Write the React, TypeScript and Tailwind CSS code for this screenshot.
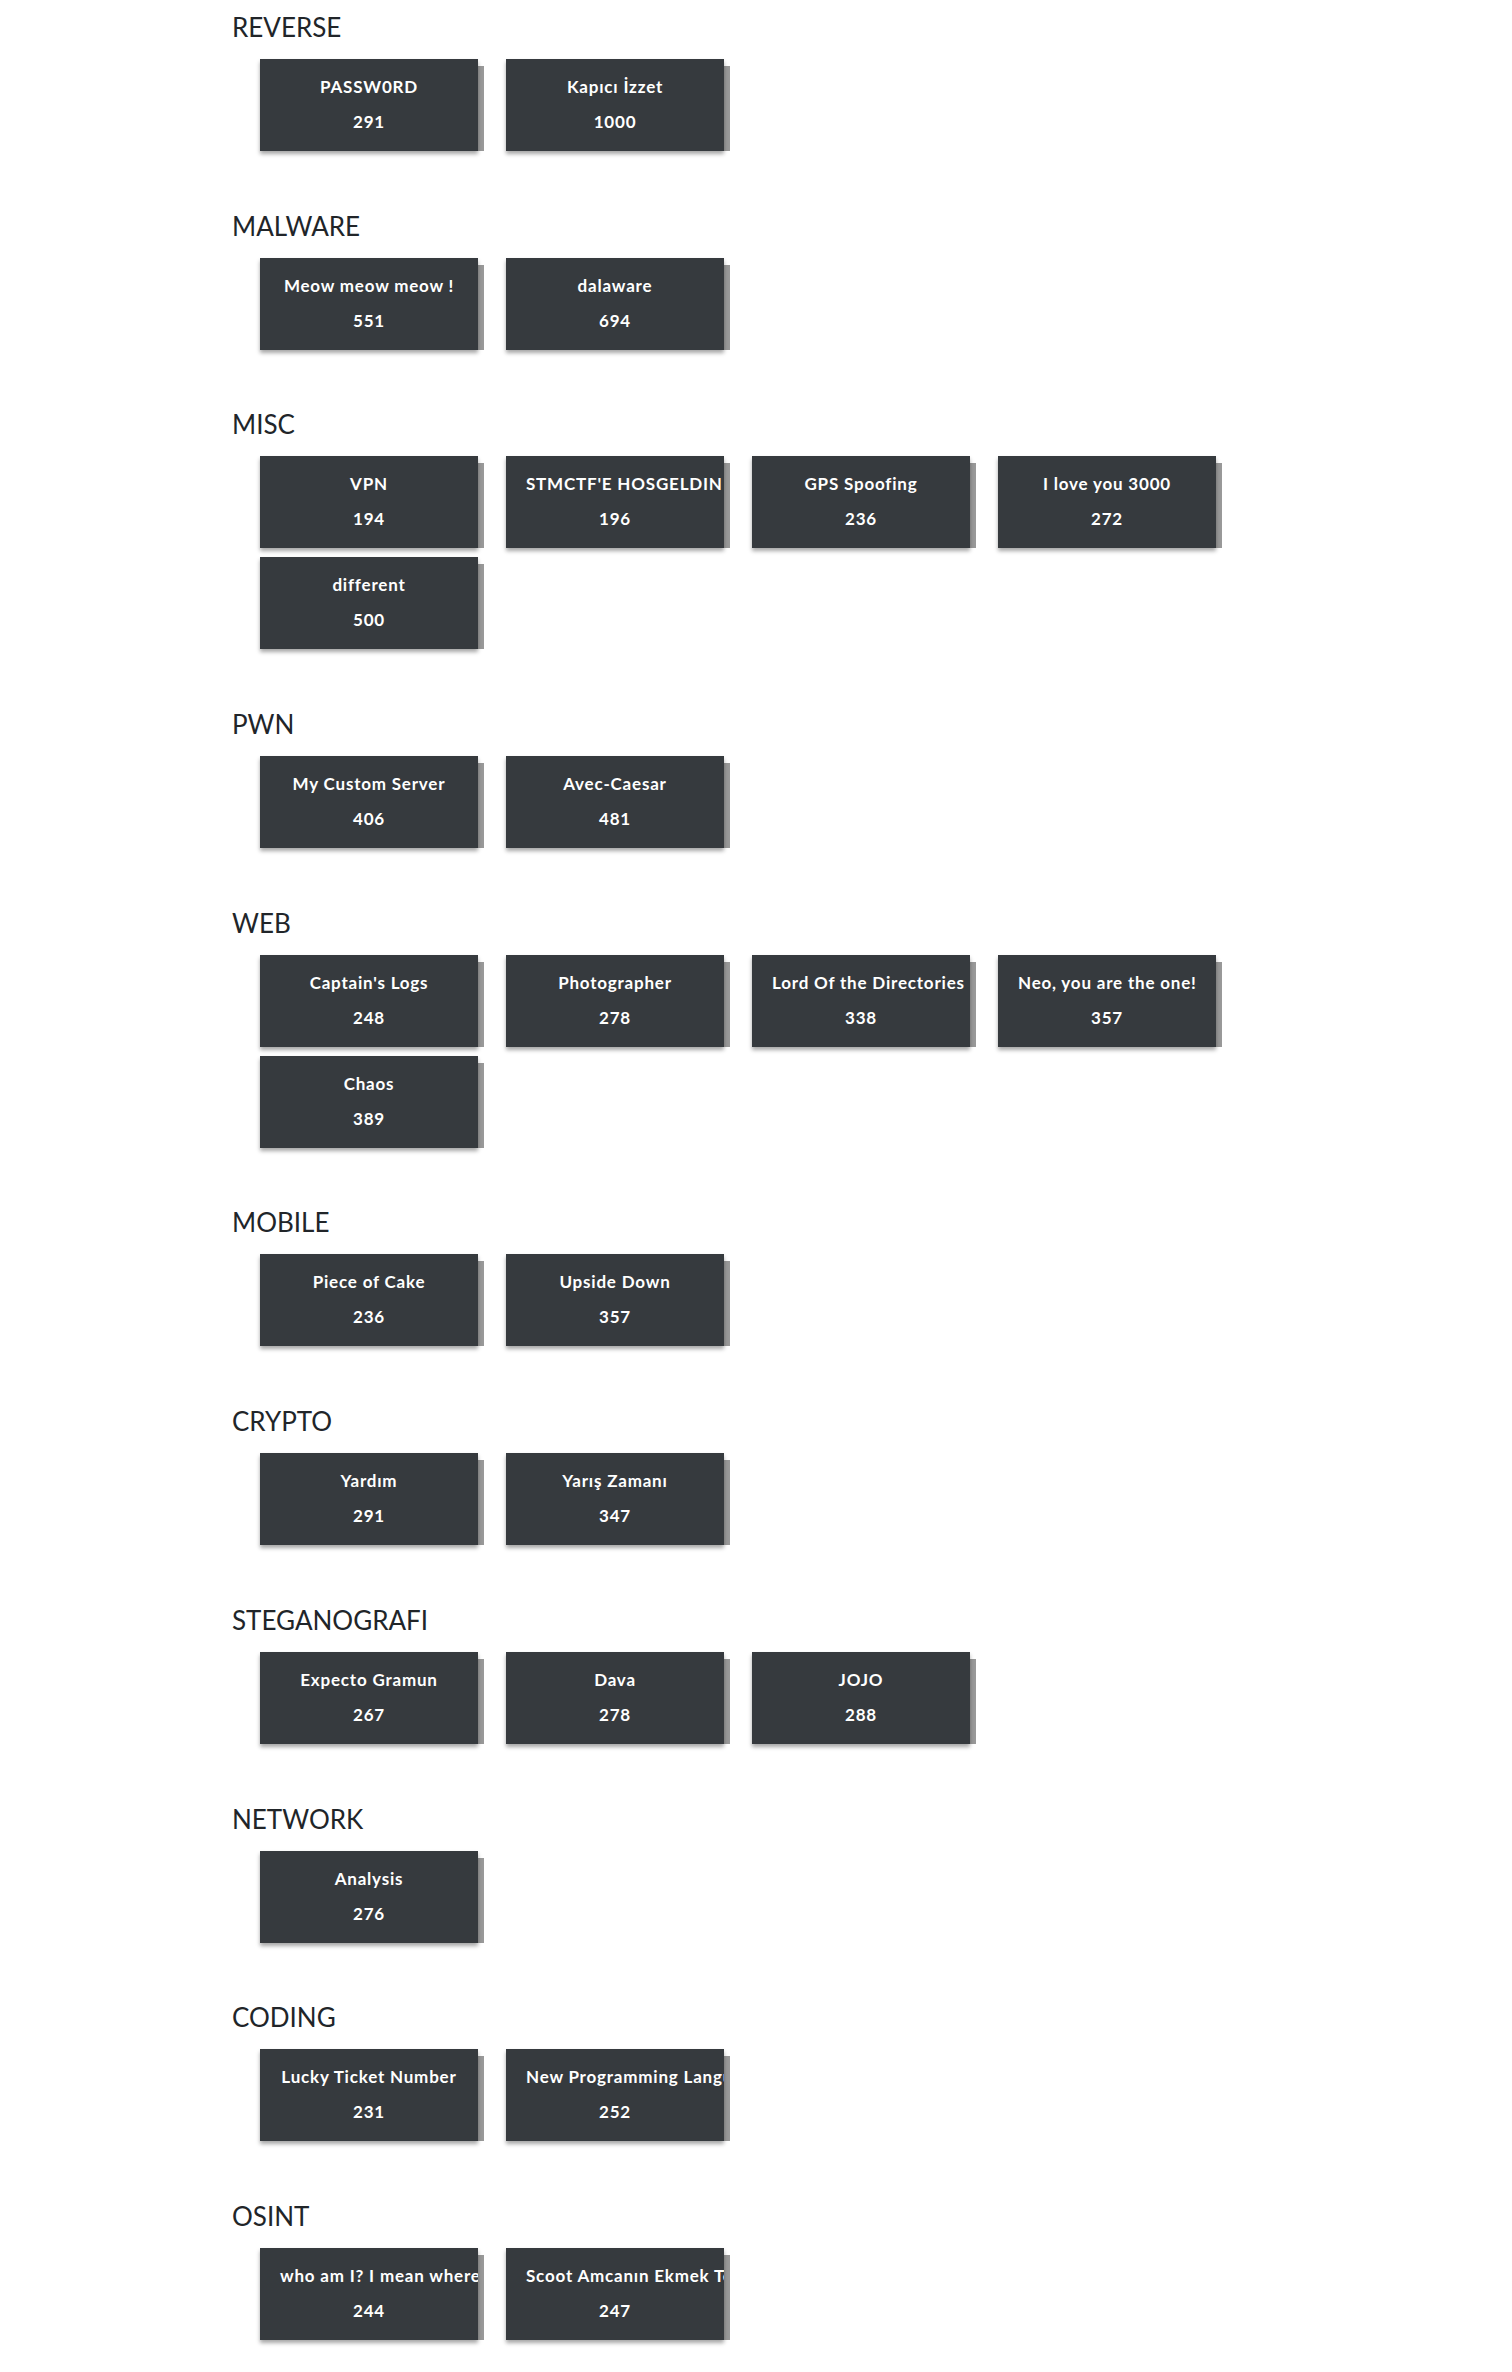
import React from "react";

type Challenge = { name: string; points: number };
type Category = { title: string; items: Challenge[] };

const data: Category[] = [
  { title: "REVERSE", items: [{ name: "PASSW0RD", points: 291 }, { name: "Kapıcı İzzet", points: 1000 }] },
  { title: "MALWARE", items: [{ name: "Meow meow meow !", points: 551 }, { name: "dalaware", points: 694 }] },
  {
    title: "MISC",
    items: [
      { name: "VPN", points: 194 },
      { name: "STMCTF'E HOSGELDIN", points: 196 },
      { name: "GPS Spoofing", points: 236 },
      { name: "I love you 3000", points: 272 },
      { name: "different", points: 500 },
    ],
  },
  { title: "PWN", items: [{ name: "My Custom Server", points: 406 }, { name: "Avec-Caesar", points: 481 }] },
  {
    title: "WEB",
    items: [
      { name: "Captain's Logs", points: 248 },
      { name: "Photographer", points: 278 },
      { name: "Lord Of the Directories", points: 338 },
      { name: "Neo, you are the one!", points: 357 },
      { name: "Chaos", points: 389 },
    ],
  },
  { title: "MOBILE", items: [{ name: "Piece of Cake", points: 236 }, { name: "Upside Down", points: 357 }] },
  { title: "CRYPTO", items: [{ name: "Yardım", points: 291 }, { name: "Yarış Zamanı", points: 347 }] },
  {
    title: "STEGANOGRAFI",
    items: [
      { name: "Expecto Gramun", points: 267 },
      { name: "Dava", points: 278 },
      { name: "JOJO", points: 288 },
    ],
  },
  { title: "NETWORK", items: [{ name: "Analysis", points: 276 }] },
  { title: "CODING", items: [{ name: "Lucky Ticket Number", points: 231 }, { name: "New Programming Language", points: 252 }] },
  { title: "OSINT", items: [{ name: "who am I? I mean where am I?", points: 244 }, { name: "Scoot Amcanın Ekmek Teknesi", points: 247 }] },
];

function Card({ c }: { c: Challenge }) {
  return (
    <div className="relative w-[218px] h-[92px]">
      <div className="absolute left-full top-[7px] bottom-0 w-[6px] bg-[#999999]" />
      <div className="relative h-full w-full overflow-hidden bg-[#363a3e] px-[20px] pt-[16px] text-center text-white font-bold text-[17px] tracking-[0.8px] whitespace-nowrap shadow-[0_3px_4px_rgba(0,0,0,0.35)]">
        <div className="leading-[24px]">{c.name}</div>
        <div className="leading-[24px] mt-[11px]">{c.points}</div>
      </div>
    </div>
  );
}

export default function App() {
  return (
    <div className="min-h-screen bg-white" style={{ fontFamily: "Lato, 'Noto Sans', sans-serif" }}>
      <div className="pl-[232px] pt-[12px]">
        {data.map((cat) => (
          <section key={cat.title} className="mb-[59.7px]">
            <h2 className="text-[26px] leading-[30px] text-[#212529] font-normal">{cat.title}</h2>
            <div className="mt-[17px] ml-[28px] grid grid-cols-[repeat(4,218px)] gap-x-[28px] gap-y-[9px]">
              {cat.items.map((c) => (
                <Card key={c.name} c={c} />
              ))}
            </div>
          </section>
        ))}
      </div>
    </div>
  );
}
